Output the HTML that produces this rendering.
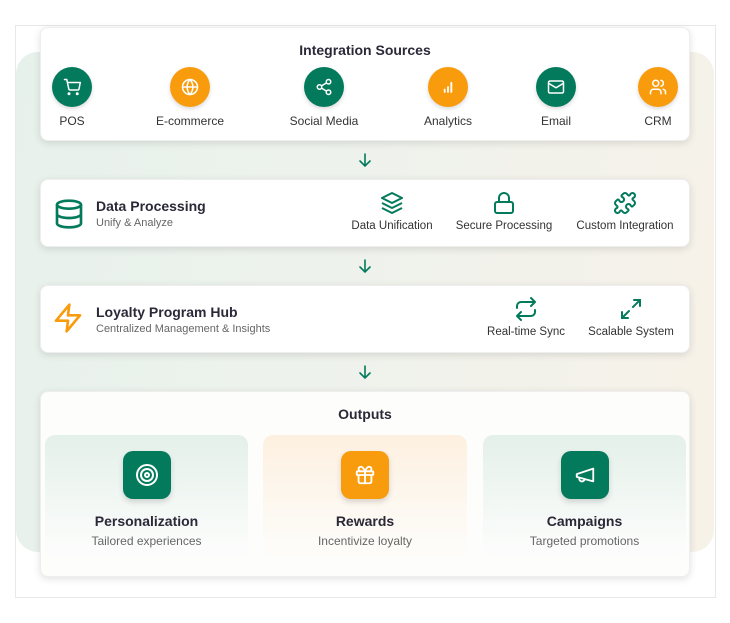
<!DOCTYPE html>
<html><head><meta charset="utf-8"><style>
*{margin:0;padding:0;box-sizing:border-box}
body{width:730px;height:623px;background:#fff;font-family:"Liberation Sans",sans-serif;position:relative;overflow:hidden;color:#2b2838}
.frame{position:absolute;left:15px;top:25px;width:701px;height:573px;border:1px solid #e8e8e8}
.bg{position:absolute;left:16px;top:52px;width:698px;height:500px;border-radius:22px;background:linear-gradient(100deg,#e7f1ec 0%,#eff2ec 50%,#f7f2e8 100%)}
.card{position:absolute;left:40px;width:650px;background:#fff;border-radius:8px;box-shadow:0 2px 8px rgba(0,0,0,.12);border:1px solid #eee}
.h{font-weight:bold;font-size:14px;color:#2b2838}
.circ{position:absolute;width:40px;height:40px;border-radius:50%;display:flex;align-items:center;justify-content:center;box-shadow:0 2px 4px rgba(0,0,0,.15)}
.g{background:#037a5b}.o{background:#f89c0e}
.lab{position:absolute;font-size:12px;color:#333;transform:translateX(-50%);white-space:nowrap}
.arr{position:absolute;left:358px}
.sub{position:absolute;top:435px;width:203px;height:122px;border-radius:10px}
.sq{position:absolute;left:50%;margin-left:-24px;top:16px;width:48px;height:48px;border-radius:10px;display:flex;align-items:center;justify-content:center;box-shadow:0 3px 6px rgba(0,0,0,.15)}
.st{position:absolute;width:100%;text-align:center;top:78px;font-weight:bold;font-size:14px}
.ss{position:absolute;width:100%;text-align:center;top:99px;font-size:12px;color:#666}
svg{display:block}
</style></head><body>
<div class="frame"></div>
<div class="bg"></div>

<div class="card" style="top:27px;height:114px">
 <div class="h" style="position:absolute;top:14px;width:100%;text-align:center">Integration Sources</div>
</div>
<div class="circ g" style="left:52px;top:67px"><svg width="18" height="18" viewBox="0 0 24 24" fill="none" stroke="#fff" stroke-width="2" stroke-linecap="round" stroke-linejoin="round"><circle cx="8" cy="21" r="1"/><circle cx="19" cy="21" r="1"/><path d="M2 2h3l2.7 12.4a2 2 0 0 0 2 1.6h9.7a2 2 0 0 0 2-1.6L23 6H6"/></svg></div>
<div class="circ o" style="left:170px;top:67px"><svg width="18" height="18" viewBox="0 0 24 24" fill="none" stroke="#fff" stroke-width="2"><circle cx="12" cy="12" r="10"/><path d="M2 12h20M12 2a15 15 0 0 1 0 20a15 15 0 0 1 0-20"/></svg></div>
<div class="circ g" style="left:304px;top:67px"><svg width="18" height="18" viewBox="0 0 24 24" fill="none" stroke="#fff" stroke-width="2"><circle cx="18" cy="5" r="3"/><circle cx="6" cy="12" r="3"/><circle cx="18" cy="19" r="3"/><path d="M8.6 13.5l6.8 4M15.4 6.5l-6.8 4"/></svg></div>
<div class="circ o" style="left:428px;top:67px"><svg width="20" height="20" viewBox="0 0 24 24" fill="none" stroke="#fff" stroke-width="2.2" stroke-linecap="round"><path d="M8 18v-3M12 18v-6M16 18V7"/></svg></div>
<div class="circ g" style="left:536px;top:67px"><svg width="18" height="18" viewBox="0 0 24 24" fill="none" stroke="#fff" stroke-width="2"><rect x="2" y="4" width="20" height="16" rx="2"/><path d="M22 7l-10 6L2 7"/></svg></div>
<div class="circ o" style="left:638px;top:67px"><svg width="18" height="18" viewBox="0 0 24 24" fill="none" stroke="#fff" stroke-width="2" stroke-linecap="round"><path d="M16 21v-2a4 4 0 0 0-4-4H6a4 4 0 0 0-4 4v2"/><circle cx="9" cy="7" r="4"/><path d="M22 21v-2a4 4 0 0 0-3-3.9M16 3.1a4 4 0 0 1 0 7.8"/></svg></div>
<div class="lab" style="left:72px;top:114px">POS</div>
<div class="lab" style="left:190px;top:114px">E-commerce</div>
<div class="lab" style="left:324px;top:114px">Social Media</div>
<div class="lab" style="left:448px;top:114px">Analytics</div>
<div class="lab" style="left:556px;top:114px">Email</div>
<div class="lab" style="left:658px;top:114px">CRM</div>

<svg class="arr" style="top:152px" width="14" height="16" viewBox="0 0 14 16" fill="none" stroke="#037a5b" stroke-width="1.6" stroke-linecap="round"><path d="M7 2v12M2 9l5 5 5-5"/></svg>

<div class="card" style="top:179px;height:68px">
 <svg style="position:absolute;left:12px;top:18px" width="32" height="32" viewBox="0 0 24 24" fill="none" stroke="#037a5b" stroke-width="2"><ellipse cx="12" cy="5" rx="9" ry="3"/><path d="M3 5v14c0 1.7 4 3 9 3s9-1.3 9-3V5M3 12c0 1.7 4 3 9 3s9-1.3 9-3"/></svg>
 <div class="h" style="position:absolute;left:55px;top:18px">Data Processing</div>
 <div style="position:absolute;left:55px;top:37px;font-size:11px;color:#666">Unify &amp; Analyze</div>
</div>
<svg style="position:absolute;left:380px;top:191px" width="24" height="24" viewBox="0 0 24 24" fill="none" stroke="#037a5b" stroke-width="2" stroke-linejoin="round"><path d="M12 2L2 7l10 5 10-5-10-5zM2 12l10 5 10-5M2 17l10 5 10-5"/></svg>
<svg style="position:absolute;left:492px;top:191px" width="24" height="24" viewBox="0 0 24 24" fill="none" stroke="#037a5b" stroke-width="2"><rect x="3" y="11" width="18" height="11" rx="2"/><path d="M7 11V7a5 5 0 0 1 10 0v4"/></svg>
<svg style="position:absolute;left:613px;top:191px" width="24" height="24" viewBox="0 0 24 24" fill="none" stroke="#037a5b" stroke-width="2" stroke-linejoin="round"><path d="M19.439 7.85c-.049.322.059.648.289.878l1.568 1.568c.47.47.706 1.087.706 1.704s-.235 1.233-.706 1.704l-1.611 1.611a.98.98 0 0 1-.837.276c-.47-.07-.802-.48-.968-.925a2.501 2.501 0 1 0-3.214 3.214c.446.166.855.497.925.968a.979.979 0 0 1-.276.837l-1.61 1.61a2.404 2.404 0 0 1-1.705.707 2.402 2.402 0 0 1-1.704-.706l-1.568-1.568a1.026 1.026 0 0 0-.877-.29c-.493.074-.84.504-1.02.968a2.5 2.5 0 1 1-3.237-3.237c.464-.18.894-.527.967-1.02a1.026 1.026 0 0 0-.289-.877l-1.568-1.568A2.402 2.402 0 0 1 1.998 12c0-.617.236-1.234.706-1.704L4.23 8.77c.24-.24.581-.353.917-.303.515.077.877.528 1.073 1.01a2.5 2.5 0 1 0 3.259-3.259c-.482-.196-.933-.558-1.01-1.073-.05-.336.062-.676.303-.917l1.525-1.525A2.402 2.402 0 0 1 12 1.998c.617 0 1.234.236 1.704.706l1.568 1.568c.23.23.556.338.877.29.493-.074.84-.504 1.02-.968a2.5 2.5 0 1 1 3.237 3.237c-.464.18-.894.527-.967 1.02Z"/></svg>
<div class="lab" style="left:392px;top:220px;font-size:11.5px">Data Unification</div>
<div class="lab" style="left:504px;top:220px;font-size:11.5px">Secure Processing</div>
<div class="lab" style="left:625px;top:220px;font-size:11.5px">Custom Integration</div>

<svg class="arr" style="top:258px" width="14" height="16" viewBox="0 0 14 16" fill="none" stroke="#037a5b" stroke-width="1.6" stroke-linecap="round"><path d="M7 2v12M2 9l5 5 5-5"/></svg>

<div class="card" style="top:285px;height:68px">
 <svg style="position:absolute;left:11px;top:16px" width="32" height="32" viewBox="0 0 24 24" fill="none" stroke="#f89c0e" stroke-width="2" stroke-linejoin="round"><path d="M13 2L3 14h9l-1 8 10-12h-9l1-8z"/></svg>
 <div class="h" style="position:absolute;left:55px;top:18px">Loyalty Program Hub</div>
 <div style="position:absolute;left:55px;top:37px;font-size:11px;color:#666">Centralized Management &amp; Insights</div>
</div>
<svg style="position:absolute;left:514px;top:297px" width="24" height="24" viewBox="0 0 24 24" fill="none" stroke="#037a5b" stroke-width="2" stroke-linecap="round" stroke-linejoin="round"><path d="M17 1l4 4-4 4M3 11V9a4 4 0 0 1 4-4h14M7 23l-4-4 4-4M21 13v2a4 4 0 0 1-4 4H3"/></svg>
<svg style="position:absolute;left:619px;top:297px" width="24" height="24" viewBox="0 0 24 24" fill="none" stroke="#037a5b" stroke-width="2" stroke-linecap="round"><path d="M15 3h6v6M21 3l-7 7M9 21H3v-6M3 21l7-7"/></svg>
<div class="lab" style="left:526px;top:326px;font-size:11.5px">Real-time Sync</div>
<div class="lab" style="left:631px;top:326px;font-size:11.5px">Scalable System</div>

<svg class="arr" style="top:364px" width="14" height="16" viewBox="0 0 14 16" fill="none" stroke="#037a5b" stroke-width="1.6" stroke-linecap="round"><path d="M7 2v12M2 9l5 5 5-5"/></svg>

<div class="card" style="top:391px;height:186px;background:#fdfdfb">
 <div class="h" style="position:absolute;top:14px;width:100%;text-align:center">Outputs</div>
</div>
<div class="sub" style="left:45px;background:linear-gradient(180deg,#e4f0ea,#fbfcfb 90%)">
 <div class="sq g"><svg width="24" height="24" viewBox="0 0 24 24" fill="none" stroke="#fff" stroke-width="2"><circle cx="12" cy="12" r="10"/><circle cx="12" cy="12" r="6"/><circle cx="12" cy="12" r="2"/></svg></div>
 <div class="st">Personalization</div><div class="ss">Tailored experiences</div></div>
<div class="sub" style="left:263px;width:204px;background:linear-gradient(180deg,#fdf0e0,#fdfcf9 90%)">
 <div class="sq o"><svg width="22" height="22" viewBox="0 0 24 24" fill="none" stroke="#fff" stroke-width="2" stroke-linejoin="round"><rect x="3" y="8" width="18" height="4" rx="1"/><path d="M12 8v13M19 12v7a2 2 0 0 1-2 2H7a2 2 0 0 1-2-2v-7M7.5 8a2.5 2.5 0 0 1 0-5C10 3 12 8 12 8s2-5 4.5-5a2.5 2.5 0 0 1 0 5"/></svg></div>
 <div class="st">Rewards</div><div class="ss">Incentivize loyalty</div></div>
<div class="sub" style="left:483px;background:linear-gradient(180deg,#e4f0ea,#fbfcfb 90%)">
 <div class="sq g"><svg width="22" height="22" viewBox="0 0 24 24" fill="none" stroke="#fff" stroke-width="2" stroke-linejoin="round"><path d="M3 11l18-6v14L3 14z"/><path d="M11.6 16.8a3 3 0 1 1-5.8-1.6"/></svg></div>
 <div class="st">Campaigns</div><div class="ss">Targeted promotions</div></div>
</body></html>
